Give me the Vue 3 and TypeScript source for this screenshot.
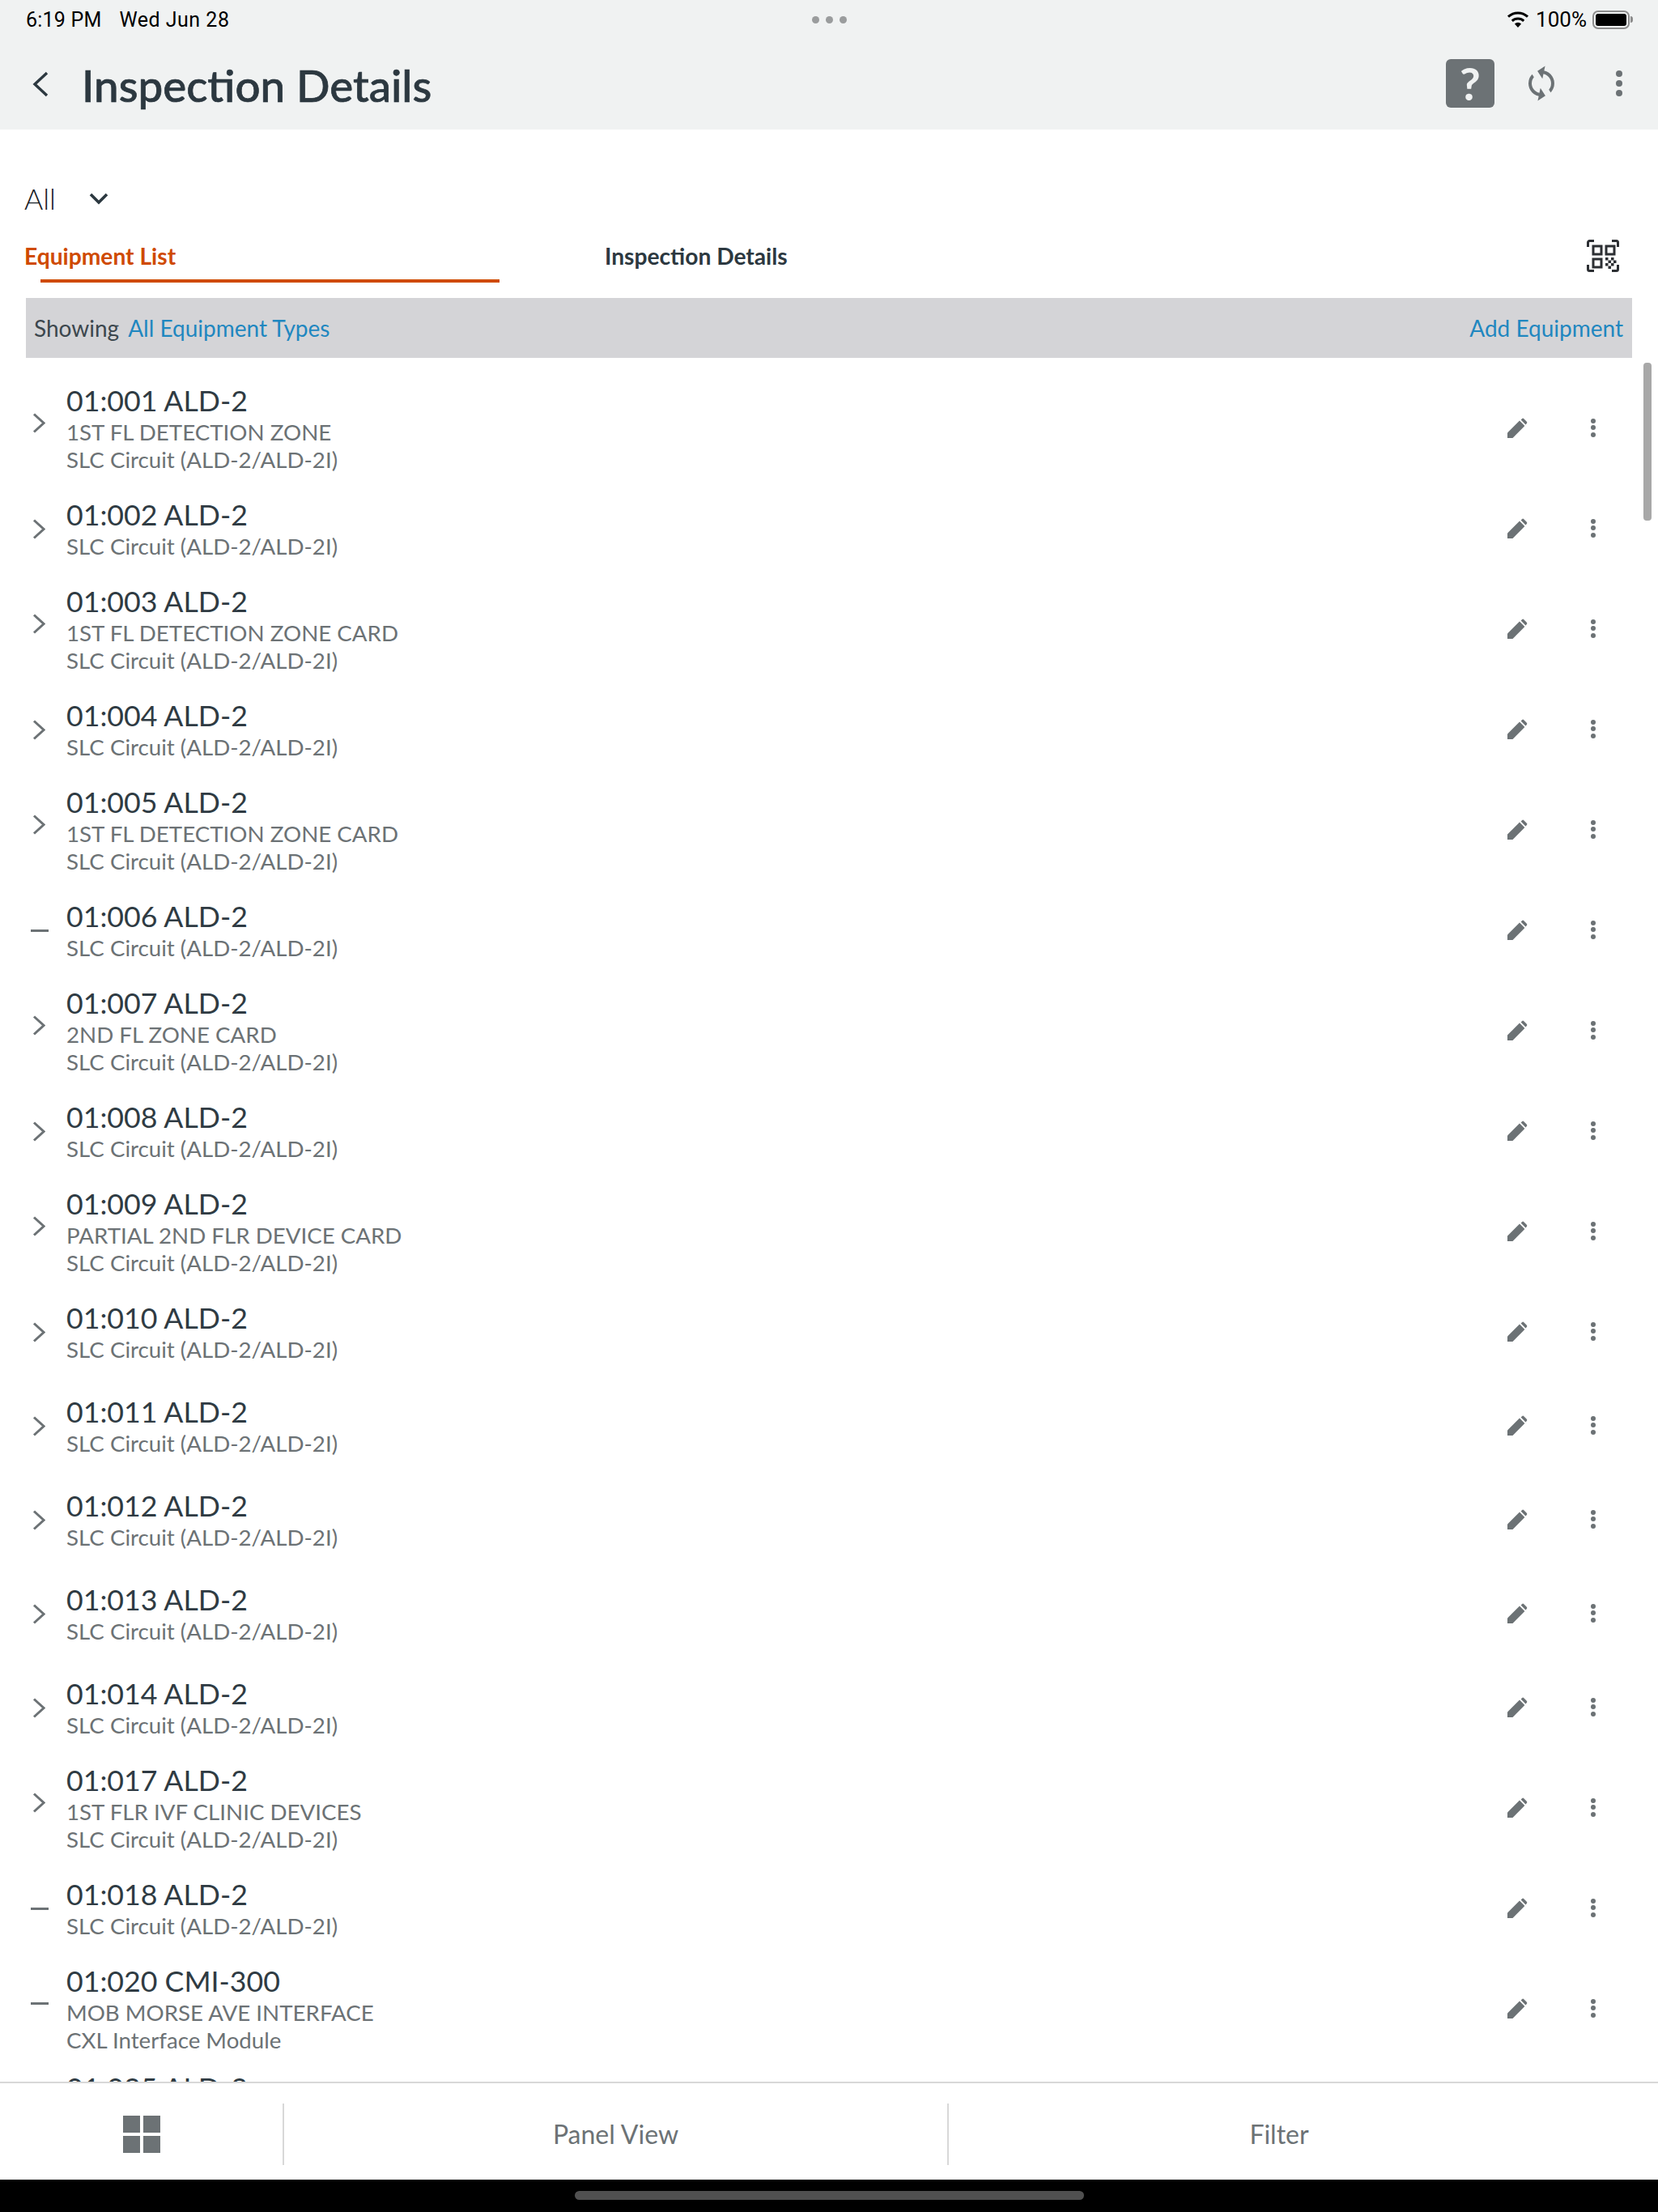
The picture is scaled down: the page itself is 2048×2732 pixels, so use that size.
<script setup lang="ts">
interface Row {
  id: string
  zone?: string
  type: string
  open?: boolean
}
const slc = 'SLC Circuit (ALD-2/ALD-2I)'
const rows: Row[] = [
  { id: '01:001 ALD-2', zone: '1ST FL DETECTION ZONE', type: slc, open: true },
  { id: '01:002 ALD-2', type: slc, open: true },
  { id: '01:003 ALD-2', zone: '1ST FL DETECTION ZONE CARD', type: slc, open: true },
  { id: '01:004 ALD-2', type: slc, open: true },
  { id: '01:005 ALD-2', zone: '1ST FL DETECTION ZONE CARD', type: slc, open: true },
  { id: '01:006 ALD-2', type: slc },
  { id: '01:007 ALD-2', zone: '2ND FL ZONE CARD', type: slc, open: true },
  { id: '01:008 ALD-2', type: slc, open: true },
  { id: '01:009 ALD-2', zone: 'PARTIAL 2ND FLR DEVICE CARD', type: slc, open: true },
  { id: '01:010 ALD-2', type: slc, open: true },
  { id: '01:011 ALD-2', type: slc, open: true },
  { id: '01:012 ALD-2', type: slc, open: true },
  { id: '01:013 ALD-2', type: slc, open: true },
  { id: '01:014 ALD-2', type: slc, open: true },
  { id: '01:017 ALD-2', zone: '1ST FLR IVF CLINIC DEVICES', type: slc, open: true },
  { id: '01:018 ALD-2', type: slc },
  { id: '01:020 CMI-300', zone: 'MOB MORSE AVE INTERFACE', type: 'CXL Interface Module' },
  { id: '01:025 ALD-2', zone: '\u00a0', type: slc, open: true }
]
</script>

<template>
  <div class="app">
    <header class="top">
      <div class="status">
        <span class="time">6:19 PM</span>
        <span class="date">Wed Jun 28</span>
        <div class="grabber"><i></i><i></i><i></i></div>
        <svg class="wifi" viewBox="0 0 28 20" aria-hidden="true">
          <path d="M14 20 9.9 15.4a6 6 0 0 1 8.2 0Z" fill="#000" />
          <path d="M6.8 11.9a10.6 10.6 0 0 1 14.4 0" fill="none" stroke="#000" stroke-width="3" />
          <path d="M2 6.7a17.6 17.6 0 0 1 24 0" fill="none" stroke="#000" stroke-width="3" />
        </svg>
        <span class="pct">100%</span>
        <div class="battery"><b></b></div>
        <div class="nub"></div>
      </div>
      <div class="titlebar">
        <svg class="back" viewBox="0 0 20 32" aria-hidden="true">
          <path d="M18 2 3 16l15 14" fill="none" stroke="#2c3840" stroke-width="3.4" />
        </svg>
        <h1 class="title">Inspection Details</h1>
        <div class="help">?</div>
        <svg class="sync" viewBox="0 0 24 24" aria-hidden="true">
          <path fill="#6c7275" d="M12 4V1L8 5l4 4V6c3.31 0 6 2.69 6 6 0 1.01-.25 1.97-.7 2.8l1.46 1.46C19.54 15.03 20 13.57 20 12c0-4.42-3.58-8-8-8zm0 14c-3.31 0-6-2.69-6-6 0-1.01.25-1.97.7-2.8L5.24 7.74C4.46 8.97 4 10.43 4 12c0 4.42 3.58 8 8 8v3l4-4-4-4v3z" />
        </svg>
        <div class="kebab"><i></i><i></i><i></i></div>
      </div>
    </header>

    <main class="content">
      <div class="filter">
        <span class="all">All</span>
        <svg class="down" viewBox="0 0 24 15" aria-hidden="true">
          <path d="M2 2l10 10L22 2" fill="none" stroke="#2c3840" stroke-width="3.6" />
        </svg>
      </div>
      <div class="tabs">
        <span class="tab active">Equipment List</span>
        <span class="tab">Inspection Details</span>
        <svg class="qr" viewBox="0 0 40 40" aria-hidden="true">
          <g fill="none" stroke="#2c2f33" stroke-width="3">
            <path d="M1.5 9V3.5a2 2 0 0 1 2-2H9" />
            <path d="M31 1.5h5.5a2 2 0 0 1 2 2V9" />
            <path d="M1.5 31v5.5a2 2 0 0 0 2 2H9" />
            <path d="M38.5 31v5.500a2 2 0 0 1-2 2H31" />
            <rect x="8" y="8" width="10" height="10" />
            <rect x="24" y="8" width="10" height="10" />
            <rect x="8" y="24" width="10" height="10" />
          </g>
          <g fill="#2c2f33">
            <rect x="23" y="22" width="3.500" height="3.500" />
            <rect x="30" y="22" width="3.500" height="3.500" />
            <rect x="26.500" y="25.500" width="3.500" height="3.500" />
            <rect x="33" y="25.500" width="3.500" height="3.500" />
            <rect x="23" y="29" width="3.500" height="3.500" />
            <rect x="30" y="29" width="3.500" height="3.500" />
            <rect x="26.500" y="32.500" width="3.500" height="3.500" />
          </g>
        </svg>
      </div>
      <div class="underline"></div>
      <div class="bar">
        <span class="showing">Showing</span>
        <span class="link">All Equipment Types</span>
        <span class="link add">Add Equipment</span>
      </div>
      <ul class="list">
        <li v-for="r in rows" :key="r.id" class="row" :class="{ tall: r.zone !== undefined }">
          <div class="marker">
            <svg v-if="r.open" class="chev" viewBox="0 0 16 25" aria-hidden="true">
              <path d="M2 1.500 14 12.500 2 23.500" fill="none" stroke="#6c7275" stroke-width="3" />
            </svg>
            <span v-else class="dash"></span>
          </div>
          <div class="text">
            <div class="name">{{ r.id }}</div>
            <div v-if="r.zone !== undefined" class="sub">{{ r.zone }}</div>
            <div class="sub">{{ r.type }}</div>
          </div>
          <svg class="pencil" viewBox="0 0 25 25" aria-hidden="true">
            <path fill="#6c7275" d="M0 25v-6.500L15 3.600l6.400 6.400L6.500 25Z" />
            <path fill="#6c7275" d="M18 1.200a1.600 1.600 0 0 1 2.300 0l3.500 3.500a1.600 1.600 0 0 1 0 2.300L22.500 8.500l-5.900-5.900Z" />
          </svg>
          <div class="rowdots"><i></i><i></i><i></i></div>
        </li>
      </ul>
      <div class="scrollbar"></div>
    </main>

    <footer class="foot">
      <div class="cell first">
        <div class="grid"><i></i><i></i><i></i><i></i></div>
      </div>
      <div class="cell mid">Panel View</div>
      <div class="cell last">Filter</div>
    </footer>
    <div class="home"><span></span></div>
  </div>
</template>

<style>
html, body { margin: 0; background: #fff; }
</style>

<style scoped>
.app {
  width: 2048px;
  height: 2732px;
  display: flex;
  flex-direction: column;
  overflow: hidden;
  font-family: Lato, "Liberation Sans", sans-serif;
  background: #fff;
}
.top { height: 160px; background: #f0f2f2; flex: none; }
.status {
  height: 48px;
  display: flex;
  align-items: center;
  padding-left: 32px;
  position: relative;
  font-family: Roboto, "Liberation Sans", sans-serif;
  font-size: 25px;
  color: #000;
}
.time { letter-spacing: 0.2px; }
.date { margin-left: 22px; letter-spacing: 0.5px; }
.grabber {
  position: absolute;
  left: 1003px;
  top: 20px;
  display: flex;
  gap: 8px;
}
.grabber i { width: 9px; height: 9px; border-radius: 50%; background: #9a9c9d; }
.wifi { width: 28px; height: 20px; margin-left: auto; }
.pct { margin-left: 8px; font-size: 26px; }
.battery {
  width: 46px;
  height: 23px;
  box-sizing: border-box;
  margin-left: 7px;
  border: 2px solid #8c8c8c;
  border-radius: 7px;
  padding: 2px;
  display: flex;
}
.battery b { flex: 1; background: #000; border-radius: 3px; }
.nub { width: 3px; height: 8px; background: #8c8c8c; border-radius: 0 3px 3px 0; margin: 0 31px 0 1px; }
.titlebar { height: 112px; display: flex; align-items: center; position: relative; }
.back { width: 20px; height: 32px; margin-left: 40px; }
.title {
  margin: 2px 0 0 41px;
  font-size: 54.700px;
  font-weight: 500;
  color: #2c3840;
  line-height: 70px;
  -webkit-text-stroke: 0.7px #2c3840;
}
.help {
  margin: -2px 0 0 auto;
  width: 60px;
  height: 60px;
  border-radius: 6px;
  background: #6c7275;
  color: #f0f2f2;
  font: 700 56px/60px Lato, sans-serif;
  text-align: center;
}
.sync { width: 48px; height: 48px; margin: -2px 0 0 34px; transform: rotate(12deg); }
.kebab {
  width: 8px;
  margin: -2px 44px 0 68px;
  display: flex;
  flex-direction: column;
  gap: 4px;
}
.kebab i { width: 8px; height: 8px; border-radius: 50%; background: #6c7275; }

.content { flex: 1; min-height: 0; overflow: hidden; position: relative; }
.filter { height: 60px; margin-top: 55px; display: flex; align-items: center; padding-left: 30px; }
.all { font-size: 35.500px; font-weight: 300; color: #182026; }
.down { width: 24px; height: 15px; margin-left: 41px; }
.tabs { height: 40px; margin-top: 21px; display: flex; align-items: center; position: relative; padding-left: 30px; }
.tab { font-size: 28.200px; font-weight: 700; color: #2c3840; }
.tab.active { color: #cf4a00; width: 717px; }
.qr { width: 40px; height: 40px; margin-left: auto; margin-right: 48px; }
.underline { height: 4px; width: 567px; margin: 9px 0 0 50px; background: #cf4a00; }
.bar {
  margin: 19px 32px 0 32px;
  height: 74px;
  background: #d4d4d7;
  display: flex;
  align-items: center;
  padding: 0 11px 0 10px;
  font-size: 28px;
  font-weight: 400;
}
.showing { color: #3c474e; }
.link { color: #1f87c0; margin-left: 11px; }
.add { margin-left: auto; }
.list { list-style: none; margin: 20px 0 0; padding: 0; }
.row { height: 116px; display: flex; align-items: center; }
.row.tall { height: 132px; }
.marker { width: 82px; flex: none; display: flex; align-items: center; margin-top: 2px; padding-left: 38px; box-sizing: border-box; }
.row.tall .marker { margin-top: -12px; }
.chev { width: 16px; height: 25px; margin-left: 2px; }
.dash { width: 22px; height: 3px; background: #6c7275; }
.text { flex: 1; min-width: 0; }
.name { font-size: 35.700px; line-height: 45px; color: #2f3b43; }
.sub { font-size: 27.700px; line-height: 34px; color: #6c7275; }
.pencil { width: 25px; height: 25px; flex: none; margin-right: 78px; }
.rowdots { width: 6px; flex: none; margin-right: 77px; display: flex; flex-direction: column; gap: 2.500px; }
.rowdots i { width: 6px; height: 6px; border-radius: 50%; background: #6c7275; }
.scrollbar {
  position: absolute;
  left: 2030px;
  top: 288px;
  width: 10px;
  height: 195px;
  border-radius: 4px;
  background: #a8a8a8;
}

.foot {
  height: 121px;
  box-sizing: border-box;
  flex: none;
  border-top: 2px solid #d8d8d8;
  display: flex;
  align-items: center;
  background: #fff;
  position: relative;
  padding-right: 60px;
}
.cell {
  height: 76px;
  margin-top: 6px;
  display: flex;
  align-items: center;
  justify-content: center;
  font-size: 32px;
  color: #6c7275;
}
.first { width: 349px; }
.mid { border-left: 2px solid #d8d8d8; border-right: 2px solid #d8d8d8; box-sizing: border-box; width: 823px; }
.last { flex: 1; }
.grid { display: grid; grid-template-columns: 21px 21px; grid-template-rows: 21px 21px; gap: 4px; }
.grid i { background: #6c7275; }
.home { height: 40px; flex: none; background: #000; display: flex; justify-content: center; padding-top: 14px; box-sizing: border-box; }
.home span { width: 629px; height: 11px; border-radius: 6px; background: #505050; }
</style>
